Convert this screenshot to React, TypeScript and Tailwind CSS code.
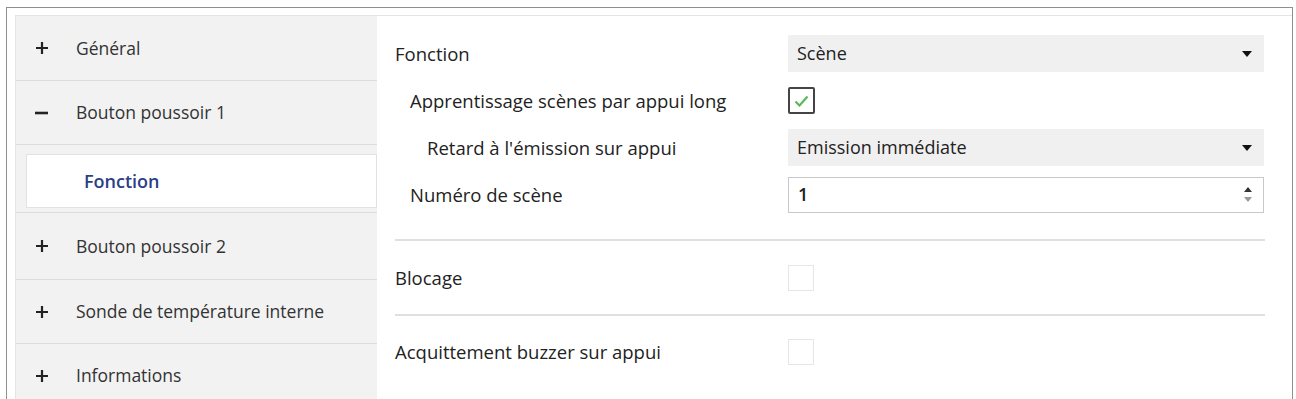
import React from "react";

const font = { fontFamily: '"Open Sans", "Noto Sans", sans-serif' };

function NavRow({ sign, label, h }: { sign: "+" | "-"; label: string; h: string }) {
  return (
    <div className={`flex items-center border-b border-[#dcdcdc] ${h}`}>
      <span className="flex w-[51px] justify-center">
        {sign === "+" ? (
          <svg width="12" height="12" viewBox="0 0 12 12">
            <path d="M6 0v12M0 6h12" stroke="#222" strokeWidth="2.2" />
          </svg>
        ) : (
          <svg width="13" height="12" viewBox="0 0 13 12">
            <path d="M0 6h13" stroke="#222" strokeWidth="2.6" />
          </svg>
        )}
      </span>
      <span className="ml-[9px] text-[17.5px] text-[#333]">{label}</span>
    </div>
  );
}

function Dropdown({ value }: { value: string }) {
  return (
    <div className="flex h-[37px] w-[476px] items-center justify-between bg-[#f0f0f0] pl-[9px] pr-[12px] text-[18px] text-[#222]">
      <span>{value}</span>
      <svg width="10" height="6" viewBox="0 0 10 6">
        <path d="M0 0h10L5 6z" fill="#111" />
      </svg>
    </div>
  );
}

function Checkbox({ checked }: { checked: boolean }) {
  return checked ? (
    <div className="flex h-[27px] w-[27px] items-center justify-center rounded-[2px] border-2 border-[#444] bg-white">
      <svg width="15" height="12" viewBox="0 0 15 12">
        <path d="M1.5 6.5l4 4L13.5 1.5" stroke="#5cb85c" strokeWidth="2.2" fill="none" />
      </svg>
    </div>
  ) : (
    <div className="h-[26px] w-[26px] border border-[#e6e6e6] bg-white" />
  );
}

function Row({
  label,
  indent,
  h = "h-[47px]",
  children,
}: {
  label: string;
  indent: string;
  h?: string;
  children: React.ReactNode;
}) {
  return (
    <div className={`flex items-center ${h}`}>
      <span className={`w-[393px] text-[18.5px] text-[#222] ${indent}`}>{label}</span>
      {children}
    </div>
  );
}

export default function App() {
  return (
    <div className="h-[399px] w-[1296px] overflow-hidden bg-white pl-[6px] pt-[7px]" style={font}>
      <div className="h-[420px] w-[1287px] border-l border-t border-r border-[#8f8f8f] pl-[8px] pt-[7px]">
        <div className="flex h-full border-l border-t border-[#e4e4e4]">
          <nav className="w-[361px] bg-[#f2f2f2]">
            <NavRow sign="+" label="Général" h="h-[65px]" />
            <NavRow sign="-" label="Bouton poussoir 1" h="h-[64px]" />
            <div className="h-[68px] border-b border-[#dcdcdc] pb-[4px] pl-[10px] pt-[9px]">
              <div className="flex h-full items-center border border-[#e2e2e2] bg-white pl-[57px] text-[18px] font-semibold text-[#2a3f86]">
                Fonction
              </div>
            </div>
            <NavRow sign="+" label="Bouton poussoir 2" h="h-[67px]" />
            <NavRow sign="+" label="Sonde de température interne" h="h-[64px]" />
            <NavRow sign="+" label="Informations" h="h-[64px]" />
          </nav>
          <main className="flex-1 bg-white pl-[18px] pt-[14px]">
            <div className="w-[870px]">
              <Row label="Fonction" indent="pl-0">
                <Dropdown value="Scène" />
              </Row>
              <Row label="Apprentissage scènes par appui long" indent="pl-[15px]">
                <Checkbox checked />
              </Row>
              <Row label="Retard à l'émission sur appui" indent="pl-[32px]">
                <Dropdown value="Emission immédiate" />
              </Row>
              <Row label="Numéro de scène" indent="pl-[15px]">
                <div className="flex h-[36px] w-[476px] items-center justify-between border border-[#c8c8c8] bg-white pl-[9px] pr-[11px] text-[18px] font-semibold text-[#222]">
                  <span>1</span>
                  <span className="flex flex-col gap-[5px]">
                    <svg width="8" height="5" viewBox="0 0 8 5">
                      <path d="M0 5h8L4 0z" fill="#333" />
                    </svg>
                    <svg width="8" height="5" viewBox="0 0 8 5">
                      <path d="M0 0h8L4 5z" fill="#999" />
                    </svg>
                  </span>
                </div>
              </Row>
              <div className="mt-[21px] border-t-2 border-[#e0e0e0]" />
              <Row label="Blocage" indent="pl-0" h="h-[73px]">
                <Checkbox checked={false} />
              </Row>
              <div className="border-t-2 border-[#e0e0e0]" />
              <Row label="Acquittement buzzer sur appui" indent="pl-0" h="h-[72px]">
                <Checkbox checked={false} />
              </Row>
            </div>
          </main>
        </div>
      </div>
    </div>
  );
}
